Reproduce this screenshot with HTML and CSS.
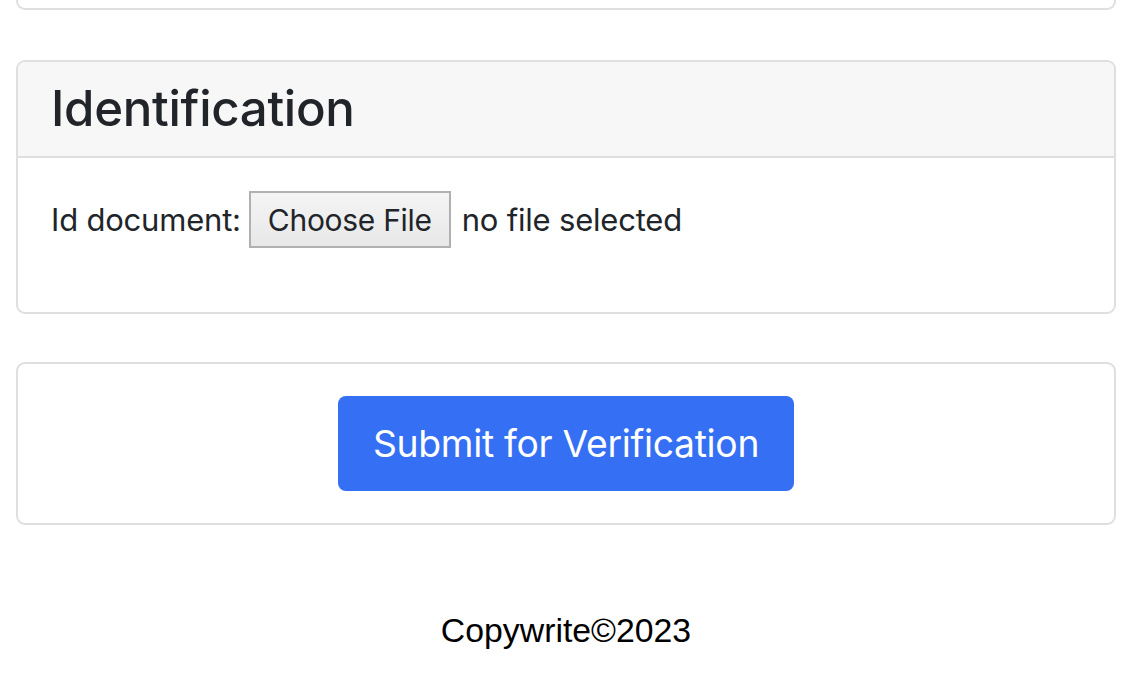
FILE: index.html
```html
<!DOCTYPE html>
<html lang="en">
<head>
<meta charset="utf-8">
<title>Identification</title>
<link rel="stylesheet" href="styles.css">
</head>
<body>
<div class="page">
  <div class="card card-tail"></div>

  <section class="card id-card">
    <div class="card-header"><h2 class="title">Identification</h2></div>
    <div class="card-body">
      <div class="field">
        <span class="label">Id document:</span>
        <span class="file-btn">Choose File</span>
        <span class="file-name">no file selected</span>
      </div>
    </div>
  </section>

  <section class="card submit-card">
    <button class="btn-primary" type="button">Submit for Verification</button>
  </section>

  <footer class="footer">Copywrite©2023</footer>
</div>
</body>
</html>
```

FILE: styles.css
```css
html, body {
  margin: 0;
  padding: 0;
  background: #ffffff;
}

body {
  font-family: Inter, "Liberation Sans", sans-serif;
  color: #212529;
}

.page {
  padding: 0 20px 0 16px;
  display: flex;
  flex-direction: column;
}

.card {
  border: 2px solid #dfdfdf;
  border-radius: 9px;
  background: #fff;
  margin-bottom: 50px;
  overflow: hidden;
}

.card-tail {
  border-top: none;
  border-radius: 0 0 9px 9px;
  height: 8px;
}

.id-card {
  margin-bottom: 48px;
}

.card-header {
  background: #f7f7f7;
  border-bottom: 2px solid #dfdfdf;
  padding: 0 33px;
  height: 94px;
  display: flex;
  align-items: center;
}

.title {
  margin: 0;
  font-size: 49.2px;
  font-weight: 500;
  letter-spacing: -0.3px;
  line-height: 1;
  color: #212529;
}

.card-body {
  padding: 33px 33px 31px;
}

.field {
  display: flex;
  align-items: center;
  height: 57px;
  margin-bottom: 33px;
  font-size: 31px;
  letter-spacing: -0.2px;
}

.label {
  margin-right: 8px;
}

.file-btn {
  display: flex;
  align-items: center;
  height: 57px;
  box-sizing: border-box;
  padding: 0 17px;
  border: 2px solid #b0b0b0;
  background: linear-gradient(#f4f4f4, #e8e8e8);
  font-size: 30px;
  letter-spacing: -0.3px;
  color: #212529;
}

.file-name {
  margin-left: 11px;
}

.submit-card {
  padding: 32px 0;
  display: flex;
  justify-content: center;
}

.btn-primary {
  font-family: Inter, "Liberation Sans", sans-serif;
  background: #356ff4;
  color: #fff;
  border: none;
  border-radius: 8px;
  height: 95px;
  width: 456px;
  font-size: 37.3px;
  letter-spacing: -0.3px;
  padding: 0;
}

.footer {
  text-align: center;
  font-family: "Liberation Sans", Arial, sans-serif;
  font-size: 33.8px;
  color: #000;
  margin-top: 36px;
}
```
